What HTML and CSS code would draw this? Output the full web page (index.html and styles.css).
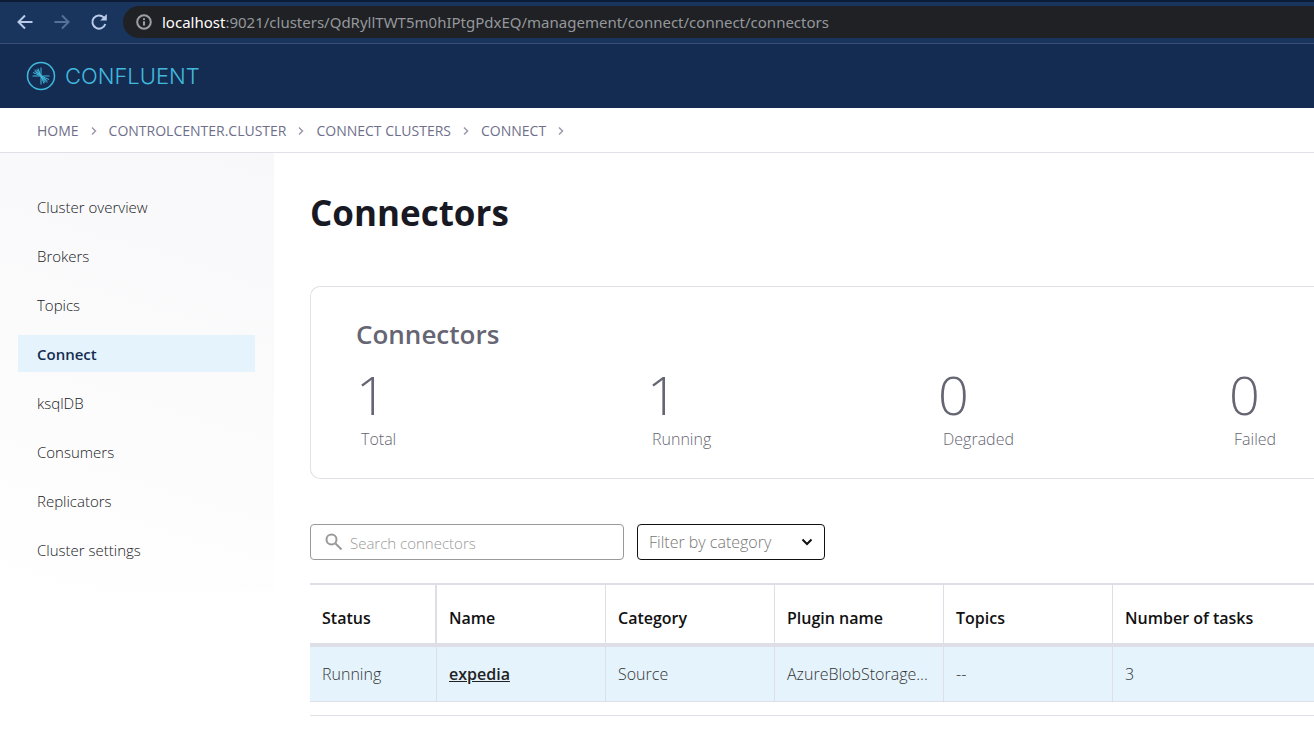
FILE: index.html
```html
<!DOCTYPE html>
<html lang="en">
<head>
<meta charset="utf-8">
<title>Connectors</title>
<meta name="viewport" content="width=device-width, initial-scale=1">
<link rel="stylesheet" href="styles.css">
</head>
<body>
<div class="toolbar">
  <button class="tool" aria-label="Back"><svg width="18" height="18" viewBox="0 0 18 18"><path d="M16.500 9H2.500M9 2.500 2.500 9 9 15.500"/></svg></button>
  <button class="tool tool-off" aria-label="Forward" disabled><svg width="18" height="18" viewBox="0 0 18 18"><path d="M1.500 9h14M9 2.500 15.500 9 9 15.500"/></svg></button>
  <button class="tool" aria-label="Reload"><svg width="18" height="18" viewBox="0 0 18 18"><path d="M15.300 11a6.600 6.600 0 1 1-1.600-6.600L15 5.700"/><path class="solid" d="M16.800 1v6.600h-6.600z"/></svg></button>
  <div class="address">
    <svg class="info" width="16" height="16" viewBox="0 0 16 16"><circle cx="8" cy="8" r="6.800"/><path d="M8 7.200v4.300M8 4.300v1.700"/></svg>
    <span class="url"><span class="host">localhost</span>:9021/clusters/QdRyllTWT5m0hIPtgPdxEQ/management/connect/connect/connectors</span>
  </div>
</div>
<header class="header">
  <a class="brand" href="#">
    <svg class="mark" width="30" height="30" viewBox="0 0 30 30">
      <circle cx="15" cy="15" r="13.500"/>
      <path d="M15 15V6.500M15 15l-3-7.500M15 15 9 8.500M15 15 7 11.500M15 15H6.500M15 15l-4-6.500M15 15l-6.500-5M15 15v8.500M15 15l3 7.500M15 15l6 6.500M15 15l8 3.500M15 15h8.500M15 15l4 6.500M15 15l6.500 5"/>
    </svg>
    <span class="wordmark">CONFLUENT</span>
  </a>
</header>
<nav class="crumbs" aria-label="Breadcrumb">
  <a href="#">HOME</a><svg width="8" height="10" viewBox="0 0 8 10"><path d="m2 1.500 3.500 3.500L2 8.500"/></svg>
  <a href="#">CONTROLCENTER.CLUSTER</a><svg width="8" height="10" viewBox="0 0 8 10"><path d="m2 1.500 3.500 3.500L2 8.500"/></svg>
  <a href="#">CONNECT CLUSTERS</a><svg width="8" height="10" viewBox="0 0 8 10"><path d="m2 1.500 3.500 3.500L2 8.500"/></svg>
  <a href="#">CONNECT</a><svg width="8" height="10" viewBox="0 0 8 10"><path d="m2 1.500 3.500 3.500L2 8.500"/></svg>
</nav>
<div class="layout">
  <nav class="sidebar" aria-label="Cluster">
    <a href="#">Cluster overview</a>
    <a href="#">Brokers</a>
    <a href="#">Topics</a>
    <a class="active" href="#">Connect</a>
    <a href="#">ksqlDB</a>
    <a href="#">Consumers</a>
    <a href="#">Replicators</a>
    <a href="#">Cluster settings</a>
  </nav>
  <main class="main">
    <h1>Connectors</h1>
    <section class="card">
      <h2>Connectors</h2>
      <div class="stats">
        <div><div class="value">1</div><div class="label">Total</div></div>
        <div><div class="value">1</div><div class="label">Running</div></div>
        <div><div class="value">0</div><div class="label">Degraded</div></div>
        <div><div class="value">0</div><div class="label">Failed</div></div>
      </div>
    </section>
    <div class="filters">
      <label class="search">
        <svg width="18" height="18" viewBox="0 0 18 18"><circle cx="6.500" cy="6.500" r="5"/><path d="m10.500 10.500 6 6"/></svg>
        <input type="text" placeholder="Search connectors" aria-label="Search connectors">
      </label>
      <div class="category">
        <select aria-label="Filter by category"><option>Filter by category</option></select>
        <svg width="12" height="8" viewBox="0 0 12 8"><path d="m1.500 1.500 4.500 4.500 4.500-4.500"/></svg>
      </div>
    </div>
    <div class="table-wrap">
      <table>
        <colgroup><col class="col-status"><col class="col"><col class="col"><col class="col"><col class="col"><col></colgroup>
        <thead><tr><th>Status</th><th>Name</th><th>Category</th><th>Plugin name</th><th>Topics</th><th>Number of tasks</th></tr></thead>
        <tbody><tr><td>Running</td><td><a href="#">expedia</a></td><td>Source</td><td>AzureBlobStorage...</td><td>--</td><td>3</td></tr></tbody>
      </table>
    </div>
  </main>
</div>
</body>
</html>
```
FILE: styles.css
```css
* { box-sizing: border-box; }
body {
  margin: 0;
  background: #fff;
  color: #191924;
  font-family: "Open Sans", "Noto Sans", sans-serif;
  font-size: 15px;
  line-height: 20px;
}
a { color: inherit; text-decoration: none; }
svg { flex: none; fill: none; stroke: currentColor; }

.toolbar {
  display: flex;
  align-items: center;
  height: 44px;
  padding: 0 0 1px 16px;
  border-top: 2px solid #0b1b35;
  border-bottom: 1px solid #3a5078;
  background: #19355e;
}
.tool {
  display: flex;
  margin-right: 19px;
  padding: 0;
  border: 0;
  background: none;
  color: #b9cbe8;
  stroke-width: 2;
}
.tool-off { color: #57709a; }
.solid { fill: currentColor; stroke: none; }
.address {
  display: flex;
  flex: 1;
  align-items: center;
  gap: 10px;
  height: 32px;
  margin-left: -4px;
  padding-left: 13px;
  border-radius: 16px 0 0 16px;
  background: #202124;
  color: #94989d;
}
.info { stroke-width: 2; color: #9aa0a6; }
.url { font-family: "Noto Sans", sans-serif; font-size: 15px; white-space: nowrap; }
.host { color: #fff; }

.header {
  display: flex;
  align-items: center;
  height: 64px;
  padding-left: 26px;
  background: #152c52;
}
.brand { display: flex; align-items: center; gap: 9px; color: #41b9dd; }
.mark { stroke-width: 1; }
.mark circle { stroke-width: 1.500; }
.wordmark { font-family: Inter, sans-serif; font-size: 22px; font-weight: 300; }

.crumbs {
  display: flex;
  align-items: center;
  gap: 11px;
  height: 45px;
  padding: 2px 0 0 37px;
  border-bottom: 1px solid #e0e0e6;
  color: #6f6f8b;
  font-size: 14px;
  font-weight: 500;
}
.crumbs svg { color: #9a9aac; stroke-width: 1.500; }

.layout { display: flex; align-items: flex-start; }
.sidebar {
  display: flex;
  flex: none;
  flex-direction: column;
  gap: 12px;
  width: 274px;
  padding: 35px 19px 23px 18px;
  background: linear-gradient(197deg, #f8f8fa 0%, #fbfbfc 50%, #fff 100%);
  font-weight: 300;
}
.sidebar a { padding: 9px 19px 8px; }
.sidebar .active { background: #e5f4fc; color: #152c52; font-weight: 600; }

.main { flex: 1; min-width: 0; padding: 36px 0 30px 36px; }
h1 { margin: 0; font-size: 35px; font-weight: 700; line-height: 48px; }
.card {
  margin-top: 49px;
  padding: 27px 0 28px 45px;
  border: 1px solid #e0e0e6;
  border-right: 0;
  border-radius: 10px 0 0 10px;
  color: #656573;
}
h2 { margin: 0; font-size: 26px; font-weight: 600; line-height: 40px; }
.stats { display: grid; grid-template-columns: 291fr 291fr 291fr 85fr; margin-top: 8px; }
.value { font-size: 54px; font-weight: 300; line-height: 64px; }
.label { padding: 2px 0 0 5px; font-size: 16px; font-weight: 300; line-height: 22px; }

.filters { display: flex; gap: 13px; margin-top: 45px; }
.search {
  display: flex;
  align-items: center;
  gap: 7px;
  width: 314px;
  height: 36px;
  padding: 0 14px;
  border: 1px solid #999;
  border-radius: 4px;
  color: #999;
  stroke-width: 2;
}
.search input {
  flex: 1;
  min-width: 0;
  padding: 2px 0 0;
  border: 0;
  background: none;
  font: inherit;
  font-weight: 300;
}
.search input::placeholder { color: #999; opacity: 1; }
.category { display: grid; align-items: center; width: 188px; height: 36px; }
.category > * { grid-area: 1 / 1; }
.category select {
  width: 100%;
  height: 100%;
  padding: 0 11px;
  border: 1px solid #111;
  border-radius: 4px;
  background: #fff;
  color: #777;
  appearance: none;
  font: inherit;
  font-size: 16px;
  font-weight: 300;
}
.category svg { justify-self: end; margin-right: 12px; color: #111; stroke-width: 2; pointer-events: none; }

.table-wrap { margin-top: 23px; padding-bottom: 13px; border-bottom: 1px solid #e0e0e6; }
table { width: 100%; border-spacing: 0; table-layout: fixed; font-size: 16px; }
.col-status { width: 127px; }
.col { width: 169px; }
th, td {
  padding: 0 0 0 12px;
  border-right: 1px solid #dedee6;
  text-align: left;
  white-space: nowrap;
}
th:last-child, td:last-child { border-right: 0; }
th {
  height: 64px;
  padding-top: 7px;
  border-top: 2px solid #dedee6;
  border-bottom: 4px solid #dedee6;
  color: #111;
  font-weight: 600;
}
th:first-child { border-right-width: 2px; }
td {
  height: 55px;
  border-bottom: 1px solid #dedee6;
  background: #e5f4fc;
  color: #333;
  font-weight: 300;
}
td a { color: #222; font-weight: 600; text-decoration: underline; }
```
